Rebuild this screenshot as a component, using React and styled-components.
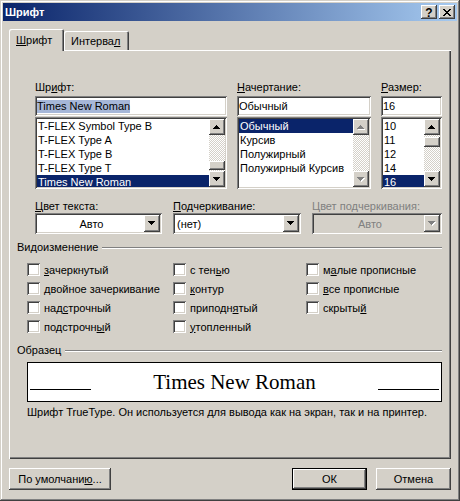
import React from "react";
import styled, { createGlobalStyle, css } from "styled-components";

const GlobalStyle = createGlobalStyle`
  * { box-sizing: border-box; }
  html, body { margin: 0; padding: 0; background: #d4d0c8; }
  body {
    font-family: "Liberation Sans", Arial, sans-serif;
    font-size: 11px;
    color: #000;
  }
`;

const raised = css`
  box-shadow: inset -1px -1px #404040, inset 1px 1px #ffffff,
    inset -2px -2px #808080, inset 2px 2px #d4d0c8;
`;

const sunken = css`
  box-shadow: inset 1px 1px #808080, inset -1px -1px #ffffff,
    inset 2px 2px #404040, inset -2px -2px #d4d0c8;
`;

const fonts = ["T-FLEX Symbol Type B", "T-FLEX Type A", "T-FLEX Type B", "T-FLEX Type T", "Times New Roman"];
const styles = ["Обычный", "Курсив", "Полужирный", "Полужирный Курсив"];
const sizes = ["10", "11", "12", "14", "16"];

const effects = [
  ["", "з", "ачеркнутый"],
  ["", "д", "войное зачеркивание"],
  ["над", "с", "трочный"],
  ["подстрочн", "ы", "й"],
  ["с тен", "ь", "ю"],
  ["", "к", "онтур"],
  ["приподн", "я", "тый"],
  ["", "у", "топленный"],
  ["м", "а", "лые прописные"],
  ["", "в", "се прописные"],
  ["скрыты", "й", ""],
];

const Window = styled.div`
  width: 460px;
  height: 501px;
  padding: 3px;
  background: #d4d0c8;
  display: flex;
  flex-direction: column;
  box-shadow: inset -1px -1px #404040, inset 1px 1px #d4d0c8,
    inset -2px -2px #808080, inset 2px 2px #ffffff;
`;

const TitleBar = styled.div`
  height: 18px;
  flex: none;
  display: flex;
  align-items: center;
  padding: 0 2px 0 2px;
  background: linear-gradient(to right, #0a246a, #a6caf0);
`;

const Title = styled.div`
  flex: 1;
  color: #fff;
  font-weight: bold;
  font-size: 11px;
`;

const TitleButton = styled.div`
  width: 16px;
  height: 14px;
  margin-left: 2px;
  background: #d4d0c8;
  ${raised};
  display: flex;
  align-items: center;
  justify-content: center;
  font-weight: bold;
  font-size: 12px;
  line-height: 14px;
  padding-top: 1px;
`;

const Body = styled.div`
  flex: 1;
  padding: 8px 6px 0;
  display: flex;
  flex-direction: column;
`;

const TabStrip = styled.div`
  height: 22px;
  display: flex;
  align-items: flex-end;
`;

const Tab = styled.div`
  width: ${(p) => (p.$selected ? 55 : 65)}px;
  height: ${(p) => (p.$selected ? 22 : 20)}px;
  padding: ${(p) => (p.$selected ? 5 : 4)}px 0 0 7px;
  line-height: 13px;
  border-radius: 2px 2px 0 0;
  border-bottom: ${(p) => (p.$selected ? "none" : "1px solid #fff")};
  box-shadow: inset 1px 1px #ffffff, inset -1px 0 #404040, inset -2px 0 #808080;
`;

const TabFill = styled.div`
  flex: 1;
  border-bottom: 1px solid #fff;
`;

const Panel = styled.div`
  height: 408px;
  flex: none;
  padding: 30px 9px 0 8px;
  box-shadow: inset 1px 0 #ffffff, inset -1px -1px #404040, inset -2px -2px #808080;
`;

const U = styled.span`
  text-decoration: underline;
`;

const PickerGrid = styled.div`
  margin-left: 18px;
  display: grid;
  grid-template-columns: 192px 134px 61px;
  column-gap: 10px;
`;

const Field = styled.div`
  display: flex;
  flex-direction: column;
`;

const Label = styled.div`
  height: 13px;
  line-height: 13px;
  margin-bottom: ${(p) => p.$gap || 0}px;
  color: ${(p) => (p.$disabled ? "#808080" : "#000")};
  white-space: nowrap;
`;

const TextBox = styled.div`
  height: 20px;
  padding: 0 2px 0 2px;
  background: #fff;
  ${sunken};
  display: flex;
  align-items: center;
`;

const Selection = styled.span`
  background: #a6b7d8;
  line-height: 13px;
`;

const List = styled.div`
  margin-top: 1px;
  height: 72px;
  padding: 2px;
  background: #fff;
  ${sunken};
  display: flex;
`;

const Items = styled.div`
  flex: 1;
  overflow: hidden;
`;

const Item = styled.div`
  height: 14px;
  line-height: 14px;
  padding-left: 1px;
  white-space: nowrap;
  background: ${(p) => (p.$selected ? "#0a246a" : "transparent")};
  color: ${(p) => (p.$selected ? "#fff" : "#000")};
`;

const Bar = styled.div`
  width: 16px;
  display: flex;
  flex-direction: column;
`;

const ArrowButton = styled.div`
  width: 16px;
  height: ${(p) => p.$h || 16}px;
  flex: none;
  background: #d4d0c8;
  ${raised};
  display: flex;
  align-items: center;
  justify-content: center;
`;

const Track = styled.div`
  flex: 1;
  background-color: #fff;
  background-image: conic-gradient(#d4d0c8 25%, #fff 0 50%, #d4d0c8 0 75%, #fff 0);
  background-size: 2px 2px;
`;

const Thumb = styled.div`
  margin-top: ${(p) => p.$top}px;
  height: ${(p) => p.$h}px;
  background: #d4d0c8;
  ${raised};
`;

const Arrow = ({ up, disabled }) => {
  const d = up
    ? "M3 0h1v1h-1zM2 1h3v1h-3zM1 2h5v1h-5zM0 3h7v1h-7z"
    : "M0 0h7v1h-7zM1 1h5v1h-5zM2 2h3v1h-3zM3 3h1v1h-1z";
  return (
    <svg width="8" height="5" viewBox="0 0 8 5" shapeRendering="crispEdges">
      {disabled && <path d={d} fill="#fff" transform="translate(1 1)" />}
      <path d={d} fill={disabled ? "#808080" : "#000"} />
    </svg>
  );
};

const ScrollBar = ({ disabled, top, h }) => (
  <Bar>
    <ArrowButton>
      <Arrow up disabled={disabled} />
    </ArrowButton>
    <Track>{!disabled && <Thumb $top={top} $h={h} />}</Track>
    <ArrowButton>
      <Arrow disabled={disabled} />
    </ArrowButton>
  </Bar>
);

const ComboGrid = styled.div`
  margin: 11px 0 0 18px;
  display: grid;
  grid-template-columns: 127px 128px 130px;
  column-gap: 11px;
`;

const Combo = styled.div`
  height: 21px;
  padding: 2px;
  background: ${(p) => (p.$disabled ? "#d4d0c8" : "#fff")};
  color: ${(p) => (p.$disabled ? "#808080" : "#000")};
  ${sunken};
  display: flex;
  align-items: center;
`;

const ComboText = styled.div`
  flex: 1;
  padding-left: 2px;
  text-align: ${(p) => (p.$center ? "center" : "left")};
`;

const GroupHeader = styled.div`
  margin-top: ${(p) => p.$top}px;
  height: 13px;
  line-height: 13px;
  display: flex;
  align-items: center;
`;

const GroupLine = styled.div`
  flex: 1;
  height: 2px;
  margin-left: 4px;
  border-top: 1px solid #808080;
  border-bottom: 1px solid #fff;
`;

const CheckGrid = styled.div`
  margin: 6px 0 0 10px;
  display: grid;
  grid-template-columns: 146px 133px 1fr;
  grid-template-rows: repeat(4, 19px);
  grid-auto-flow: column;
`;

const CheckRow = styled.div`
  display: flex;
  align-items: center;
  white-space: nowrap;
`;

const Box = styled.div`
  width: 13px;
  height: 13px;
  margin-right: 4px;
  background: #fff;
  ${sunken};
`;

const Preview = styled.div`
  margin: 5px 0 0 10px;
  height: 40px;
  border: 1px solid #000;
  background: #fff;
  padding: 0 2px;
  display: flex;
  align-items: center;
  justify-content: space-between;
`;

const Rule = styled.div`
  width: 61px;
  height: 1px;
  margin-top: 14px;
  background: #000;
`;

const SampleText = styled.div`
  font-family: "Liberation Serif", "Times New Roman", serif;
  font-size: 21px;
  line-height: 1;
`;

const Note = styled.div`
  margin: 4px 0 0 10px;
  line-height: 13px;
  white-space: nowrap;
`;

const Footer = styled.div`
  margin-top: 9px;
  display: flex;
  gap: 9px;
`;

const Button = styled.div`
  width: ${(p) => p.$w}px;
  height: 22px;
  margin-right: ${(p) => (p.$push ? "auto" : 0)};
  display: flex;
  align-items: center;
  justify-content: center;
  background: #d4d0c8;
  ${(p) =>
    p.$default
      ? css`
          box-shadow: inset 0 0 0 1px #000, inset -2px -2px #404040,
            inset 2px 2px #ffffff, inset -3px -3px #808080;
        `
      : raised};
`;

const CloseIcon = () => (
  <svg width="8" height="7" viewBox="0 0 8 7" shapeRendering="crispEdges">
    <path
      d="M0 0h2v1h-2zM6 0h2v1h-2zM1 1h2v1h-2zM5 1h2v1h-2zM2 2h4v1h-4zM3 3h2v1h-2zM2 4h4v1h-4zM1 5h2v1h-2zM5 5h2v1h-2zM0 6h2v1h-2zM6 6h2v1h-2z"
      fill="#000"
    />
  </svg>
);

export default function App() {
  return (
    <>
      <GlobalStyle />
      <Window>
        <TitleBar>
          <Title>Шрифт</Title>
          <TitleButton>?</TitleButton>
          <TitleButton>
            <CloseIcon />
          </TitleButton>
        </TitleBar>
        <Body>
          <TabStrip>
            <Tab $selected>
              <U>Ш</U>рифт
            </Tab>
            <Tab>
              Интерва<U>л</U>
            </Tab>
            <TabFill />
          </TabStrip>
          <Panel>
            <PickerGrid>
              <Field>
                <Label $gap={2}>
                  Шр<U>и</U>фт:
                </Label>
                <TextBox>
                  <Selection>Times New Roman</Selection>
                </TextBox>
                <List>
                  <Items>
                    {fonts.map((f) => (
                      <Item key={f} $selected={f === "Times New Roman"}>
                        {f}
                      </Item>
                    ))}
                  </Items>
                  <ScrollBar top={26} h={9} />
                </List>
              </Field>
              <Field>
                <Label $gap={2}>
                  <U>Н</U>ачертание:
                </Label>
                <TextBox>Обычный</TextBox>
                <List>
                  <Items>
                    {styles.map((s) => (
                      <Item key={s} $selected={s === "Обычный"}>
                        {s}
                      </Item>
                    ))}
                  </Items>
                  <ScrollBar disabled />
                </List>
              </Field>
              <Field>
                <Label $gap={2}>
                  <U>Р</U>азмер:
                </Label>
                <TextBox>16</TextBox>
                <List>
                  <Items>
                    {sizes.map((s) => (
                      <Item key={s} $selected={s === "16"}>
                        {s}
                      </Item>
                    ))}
                  </Items>
                  <ScrollBar top={2} h={10} />
                </List>
              </Field>
            </PickerGrid>

            <ComboGrid>
              <Field>
                <Label>
                  <U>Ц</U>вет текста:
                </Label>
                <Combo>
                  <ComboText $center>Авто</ComboText>
                  <ArrowButton $h={17}>
                    <Arrow />
                  </ArrowButton>
                </Combo>
              </Field>
              <Field>
                <Label>
                  <U>П</U>одчеркивание:
                </Label>
                <Combo>
                  <ComboText>(нет)</ComboText>
                  <ArrowButton $h={17}>
                    <Arrow />
                  </ArrowButton>
                </Combo>
              </Field>
              <Field>
                <Label $disabled>Цвет подчеркивания:</Label>
                <Combo $disabled>
                  <ComboText $center>Авто</ComboText>
                  <ArrowButton $h={17}>
                    <Arrow disabled />
                  </ArrowButton>
                </Combo>
              </Field>
            </ComboGrid>

            <GroupHeader $top={7}>
              Видоизменение
              <GroupLine />
            </GroupHeader>
            <CheckGrid>
              {effects.map(([a, k, b]) => (
                <CheckRow key={a + k + b}>
                  <Box />
                  <span>
                    {a}
                    <U>{k}</U>
                    {b}
                  </span>
                </CheckRow>
              ))}
            </CheckGrid>

            <GroupHeader $top={8}>
              Образец
              <GroupLine />
            </GroupHeader>
            <Preview>
              <Rule />
              <SampleText>Times New Roman</SampleText>
              <Rule />
            </Preview>
            <Note>Шрифт TrueType. Он используется для вывода как на экран, так и на принтер.</Note>
          </Panel>
          <Footer>
            <Button $w={102} $push>
              По умолчани<U>ю</U>...
            </Button>
            <Button $w={75} $default>
              ОК
            </Button>
            <Button $w={75}>Отмена</Button>
          </Footer>
        </Body>
      </Window>
    </>
  );
}
